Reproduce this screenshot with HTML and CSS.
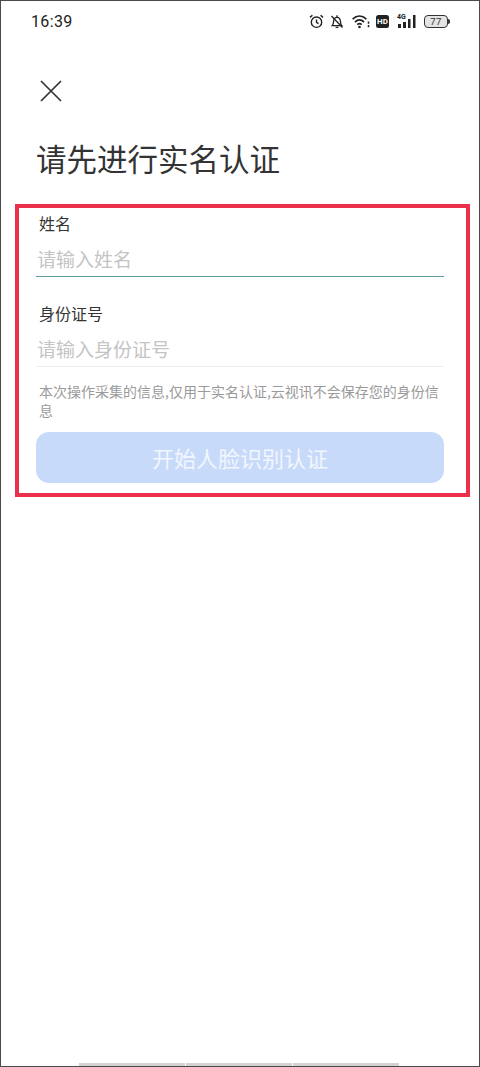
FILE: index.html
```html
<!DOCTYPE html>
<html lang="zh-CN">
<head>
<meta charset="utf-8">
<title>实名认证</title>
<link rel="stylesheet" href="styles.css">
</head>
<body>
<div class="screen">
  <header class="status">
    <span class="time">16:39</span>
    <div class="icons">
      <svg class="ic-alarm" width="15" height="15" viewBox="0 0 15 15" fill="none" stroke="#222" stroke-width="1.4"><circle cx="7.5" cy="8.2" r="5.2"/><path d="M7.5 5.4v3l2 1.3"/><path d="M1 3.4 3.4 1.3M14 3.4 11.6 1.3"/></svg>
      <svg class="ic-bell" width="14" height="15" viewBox="0 0 14 15" fill="none" stroke="#222" stroke-width="1.3"><path d="M2.2 11.6c1.2-1.2 1.3-2.4 1.4-4.2C3.7 5 5 3.3 7 3.3s3.3 1.7 3.4 4.1c.1 1.8.2 3 1.4 4.2z"/><path d="M7 1.300v2M5.600 13.300h2.800"/><path d="M1.500 2 12.500 13.500"/></svg>
      <svg class="ic-wifi" width="18" height="15" viewBox="0 0 18 15" fill="none" stroke="#222" stroke-width="1.7"><path d="M.6 5.200C4.800 1.200 10.200 1.200 14.400 5.200"/><path d="M3 8c2.900-2.600 6.100-2.600 9 0"/><path d="M5.300 10.600c1.500-1.200 2.900-1.200 4.400 0"/><circle cx="7.500" cy="13" r="1.300" fill="#222" stroke="none"/><path d="M16.500 7.500v2.200M16.500 11v2.200" stroke-width="1.500"/></svg>
      <span class="hd">HD</span>
      <span class="net"><span class="g4">4G</span><svg width="20" height="15" viewBox="0 0 20 15" fill="#222"><rect x="1" y="10" width="3" height="4"/><rect x="6" y="8" width="3" height="6"/><rect x="11" y="5" width="2.500" height="9"/><rect x="16" y="1" width="2.500" height="13"/></svg></span>
      <span class="batt"><span class="batt-body">77</span><span class="batt-tip"></span></span>
    </div>
  </header>

  <main class="page">
    <button class="close" aria-label="关闭">
      <svg width="24" height="24" viewBox="0 0 24 24" fill="none" stroke="#333" stroke-width="1.7"><path d="M2 2 22 22M22 2 2 22"/></svg>
    </button>
    <h1 class="title">请先进行实名认证</h1>

    <form class="form">
      <div class="field">
        <label class="label">姓名</label>
        <div class="input active">请输入姓名</div>
      </div>
      <div class="field second">
        <label class="label">身份证号</label>
        <div class="input">请输入身份证号</div>
      </div>
      <p class="note">本次操作采集的信息,仅用于实名认证,云视讯不会保存您的身份信息</p>
      <div class="submit">开始人脸识别认证</div>
    </form>
  </main>

  <div class="gesture"><i></i><i></i><i></i></div>
</div>
</body>
</html>
```
FILE: styles.css
```css
* { box-sizing: border-box; }
html, body { margin: 0; padding: 0; background: #fff; }
body { font-family: "Noto Sans CJK SC", "Noto Sans", sans-serif; }

.screen {
  width: 480px;
  height: 1067px;
  display: flex;
  flex-direction: column;
  border: 1px solid #4a4a4a;
  overflow: hidden;
}

.status {
  height: 41px;
  display: flex;
  align-items: center;
  justify-content: space-between;
  padding: 0 29px 1px 30px;
  flex: none;
}
.time { font-family: Roboto, sans-serif; font-size: 16px; letter-spacing: .35px; color: #222; }
.icons { display: flex; align-items: center; }
.ic-alarm { margin-right: 6px; }
.ic-bell { margin-right: 8px; }
.ic-wifi { margin-right: 6px; }
.hd {
  width: 13px; height: 13px; border-radius: 2.5px; background: #222; color: #fff;
  font: 700 8px/13px Roboto, sans-serif; text-align: center; margin-right: 8px;
}
.net { position: relative; display: block; width: 20px; height: 15px; margin-right: 7px; }
.net svg { display: block; }
.g4 { position: absolute; left: 0; top: -1px; font: 700 7px/8px Roboto, sans-serif; color: #222; }
.batt { display: flex; align-items: center; }
.batt-body {
  width: 24px; height: 13px; border: 1px solid #333; border-radius: 4px; background: #e4e4e4;
  font: 400 9.5px/11px Roboto, sans-serif; text-align: center; color: #333; letter-spacing: .3px;
}
.batt-tip { width: 2px; height: 5px; background: #333; border-radius: 0 2px 2px 0; }

.page { padding: 0 9px 0 14px; flex: none; }

.close {
  display: block; width: 24px; height: 24px; padding: 0; margin: 37px 0 0 24px;
  border: 0; background: none;
}
.close svg { display: block; }

.title {
  margin: 32px 0 0 21px;
  font-size: 30.5px;
  line-height: 46px;
  font-weight: 400;
  color: #333;
  white-space: nowrap;
}

.form {
  margin-top: 23px;
  width: 455px;
  height: 293px;
  border: 4px solid #ec2f4b;
  padding: 4px 22px 0 17px;
}

.field { display: flex; flex-direction: column; }
.second { margin-top: 25px; }
.label {
  font-size: 16px;
  line-height: 22px;
  margin: 0 0 0 3px;
  color: #333;
}
.input {
  height: 43px;
  padding: 11px 0 0 1px;
  font-size: 19px;
  line-height: 28px;
  color: #c4c4c4;
  border-bottom: 1px solid #eeeeee;
}
.input.active { border-bottom-color: #5f9aa0; }

.note {
  margin: 15px 0 0 3px;
  font-size: 14px;
  line-height: 19px;
  color: #9a9a9a;
}

.submit {
  margin-top: 12px;
  height: 51px;
  border-radius: 13px;
  background: #c8dafa;
  color: #f2f6fe;
  font-size: 22px;
  line-height: 51px;
  text-align: center;
}

.gesture {
  margin-top: auto;
  height: 3px;
  display: flex;
  gap: 1px;
  padding-left: 78px;
  flex: none;
}
.gesture i { display: block; width: 106px; height: 3px; background: #d3d3d3; }
```
